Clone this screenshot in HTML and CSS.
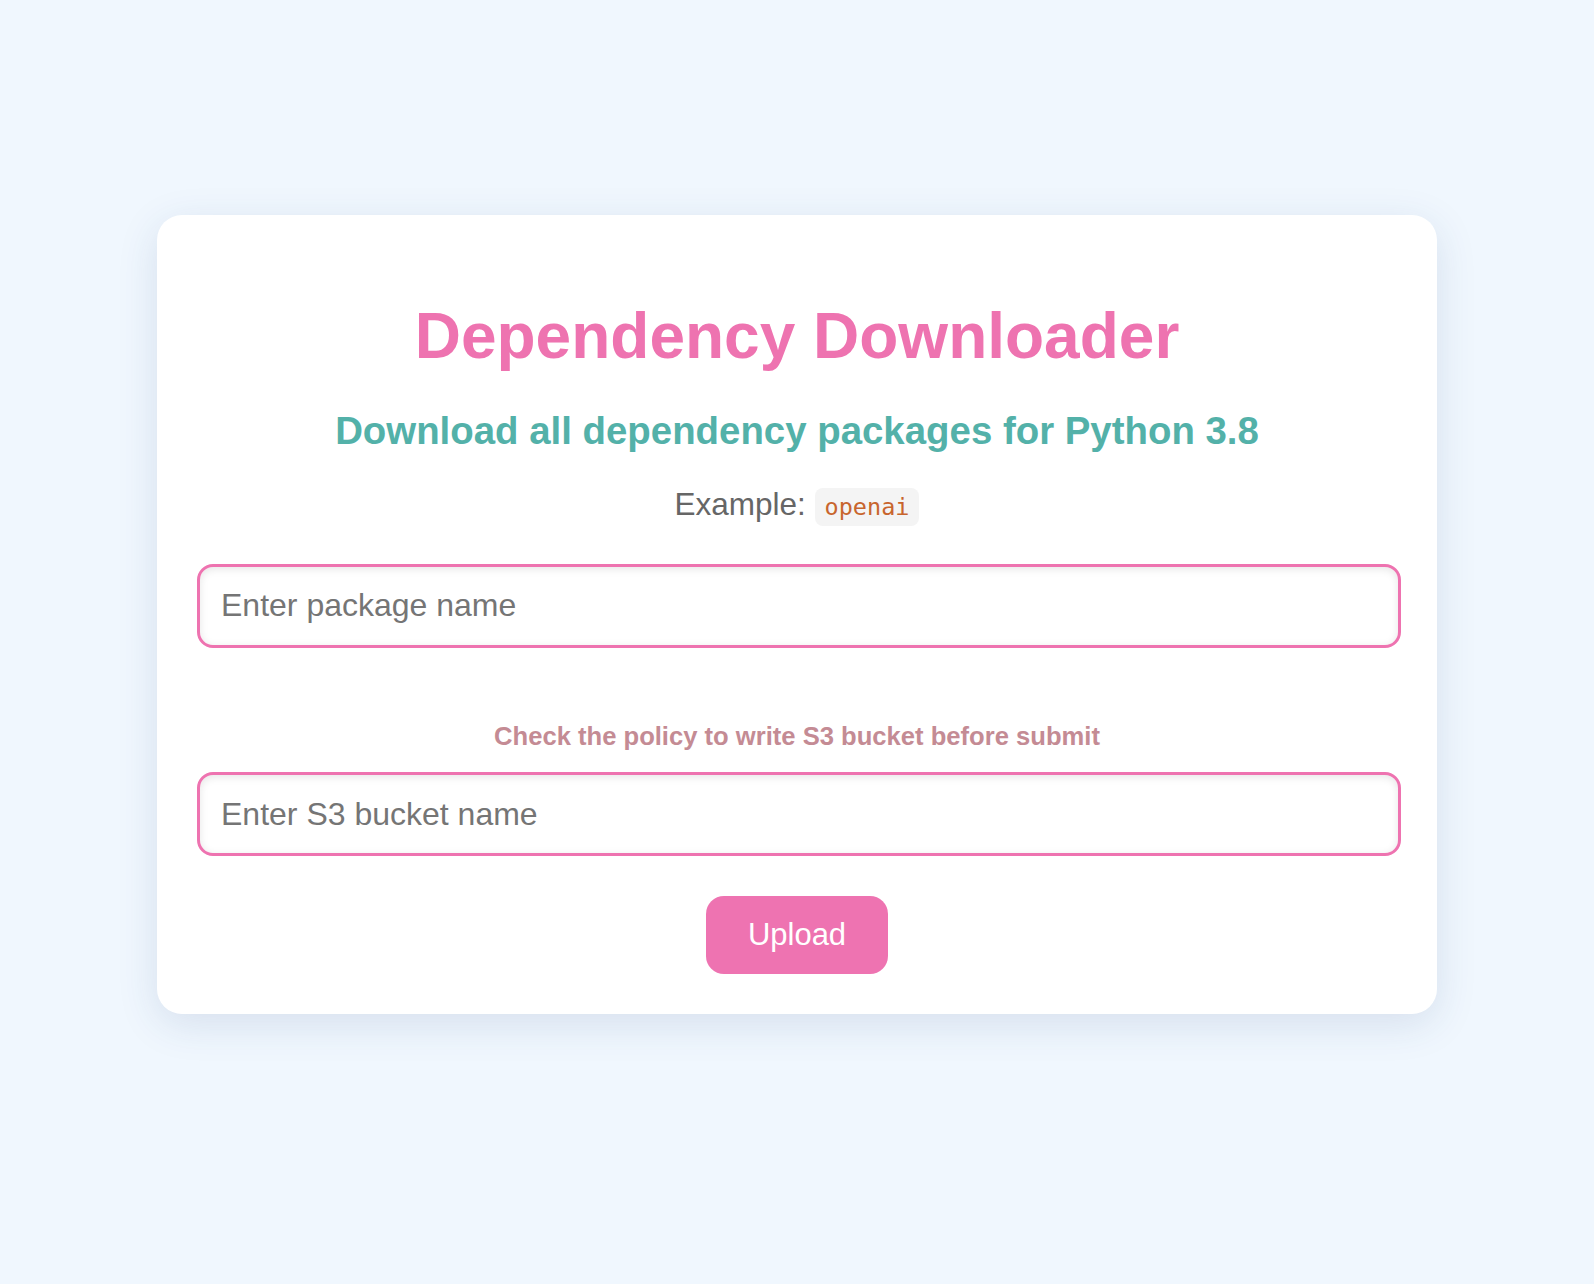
FILE: index.html
```html
<!DOCTYPE html>
<html lang="en">
<head>
<meta charset="utf-8">
<title>Dependency Downloader</title>
<link rel="stylesheet" href="styles.css">
</head>
<body>
<main class="card">
  <h1 class="title">Dependency Downloader</h1>
  <h2 class="subtitle">Download all dependency packages for Python 3.8</h2>
  <p class="example">Example: <code class="code">openai</code></p>
  <input class="field" type="text" placeholder="Enter package name">
  <p class="notice">Check the policy to write S3 bucket before submit</p>
  <input class="field" type="text" placeholder="Enter S3 bucket name">
  <div class="actions">
    <button class="upload" type="button">Upload</button>
  </div>
</main>
</body>
</html>
```

FILE: styles.css
```css
html, body {
  margin: 0;
  padding: 0;
}

body {
  background: #f0f7fe;
  font-family: "Liberation Sans", Arial, sans-serif;
  min-height: 1284px;
  padding-top: 215px;
  box-sizing: border-box;
}

.card {
  display: block;
  width: 1280px;
  box-sizing: border-box;
  margin: 0 auto;
  padding: 40px;
  background: #ffffff;
  border-radius: 25px;
  box-shadow: 0 10px 40px rgba(40, 70, 120, 0.13);
  text-align: center;
}

.title {
  margin: 45px 0 35px;
  font-size: 64px;
  line-height: 1.15;
  font-weight: bold;
  color: #ee73b0;
}

.subtitle {
  margin: 0 0 33px;
  font-size: 38.4px;
  line-height: 1.15;
  font-weight: bold;
  color: #53b1a9;
}

.example {
  margin: 0 0 42px;
  font-size: 31.5px;
  line-height: 1.15;
  color: #666666;
}

.code {
  font-family: "DejaVu Sans Mono", "Liberation Mono", monospace;
  font-size: 23.5px;
  color: #c8652d;
  background: #f4f4f4;
  padding: 5px 10px;
  border-radius: 8px;
}

.field {
  display: block;
  width: calc(100% + 4px);
  height: 84px;
  box-sizing: border-box;
  margin: 0;
  padding: 0 21px;
  border: 3.5px solid #ee73b0;
  border-radius: 16px;
  background: #ffffff;
  box-shadow: inset 0 2px 8px rgba(0, 0, 0, 0.1);
  font-family: "Liberation Sans", Arial, sans-serif;
  font-size: 32px;
  color: #333333;
  outline: none;
}

.field::placeholder {
  color: #757575;
}

.notice {
  margin: 74px 0 21px;
  font-size: 25.6px;
  line-height: 1.15;
  font-weight: bold;
  color: #c48b94;
}

.actions {
  margin-top: 40px;
  display: flex;
  justify-content: center;
}

.upload {
  padding: 21px 42px;
  border: none;
  border-radius: 18px;
  background: #ee73b1;
  color: #ffffff;
  font-family: "Liberation Sans", Arial, sans-serif;
  font-size: 31px;
  line-height: 1.15;
  cursor: pointer;
}
```
